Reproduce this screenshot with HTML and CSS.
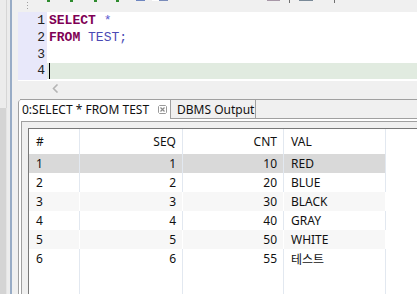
FILE: index.html
```html
<!DOCTYPE html>
<html>
<head>
<meta charset="utf-8">
<link rel="stylesheet" href="styles.css">
</head>
<body>
<div class="app">
  <div class="side">
    <div class="side-top"></div>
    <div class="side-bot"></div>
  </div>
  <div class="main">
    <div class="toolbar">
      <span class="grip"></span>
      <span class="tb g1"></span>
      <span class="tb g2"></span>
      <span class="tb g3"></span>
      <span class="tb g4"></span>
      <span class="tb b1"></span>
      <span class="tb w1"></span>
      <span class="tb b2"></span>
      <span class="tb p1"></span>
      <span class="tb t1"></span>
      <span class="tb s1"></span>
      <span class="tb t2"></span>
    </div>
    <div class="editor">
      <div class="gutter">
        <div class="ln">1</div>
        <div class="ln">2</div>
        <div class="ln">3</div>
        <div class="ln last">4</div>
      </div>
      <div class="code">
        <div class="line"><span class="kw">SELECT</span> <span class="op">*</span></div>
        <div class="line"><span class="kw">FROM</span> <span class="id">TEST;</span></div>
        <div class="line"></div>
        <div class="line cur"><span class="caret"></span></div>
      </div>
    </div>
    <div class="hscroll">
      <svg class="arrow" width="7" height="9" viewBox="0 0 7 9"><polyline points="5.5,0.5 1.5,4.5 5.5,8.5" fill="none" stroke="#b4b4b4" stroke-width="1.6"/></svg>
    </div>
    <div class="folder">
      <div class="tabstrip">
        <div class="tab active">
          <span class="tab-label">0:SELECT * FROM TEST</span>
          <svg class="close" width="9" height="9" viewBox="0 0 9 9">
            <path d="M1.5 0.5 H7.5 L8.5 1.5 V7.5 L7.5 8.5 H1.5 L0.5 7.5 V1.5 Z" fill="none" stroke="#9a9a9a" stroke-width="1"/>
            <path d="M2.5 2.5 L6.5 6.5 M6.5 2.5 L2.5 6.5" stroke="#8a8a8a" stroke-width="1.2"/>
          </svg>
        </div>
        <div class="tab">DBMS Output</div>
        <div class="tabfill"></div>
      </div>
      <div class="folder-body">
        <div class="panel">
          <div class="grid">
            <div class="row head">
              <div class="cell">#</div>
              <div class="cell num">SEQ</div>
              <div class="cell num">CNT</div>
              <div class="cell">VAL</div>
              <div class="cell rest"></div>
            </div>
            <div class="row sel">
              <div class="cell">1</div><div class="cell num">1</div><div class="cell num">10</div><div class="cell">RED</div><div class="cell rest"></div>
            </div>
            <div class="row">
              <div class="cell">2</div><div class="cell num">2</div><div class="cell num">20</div><div class="cell">BLUE</div><div class="cell rest"></div>
            </div>
            <div class="row alt">
              <div class="cell">3</div><div class="cell num">3</div><div class="cell num">30</div><div class="cell">BLACK</div><div class="cell rest"></div>
            </div>
            <div class="row">
              <div class="cell">4</div><div class="cell num">4</div><div class="cell num">40</div><div class="cell">GRAY</div><div class="cell rest"></div>
            </div>
            <div class="row alt">
              <div class="cell">5</div><div class="cell num">5</div><div class="cell num">50</div><div class="cell">WHITE</div><div class="cell rest"></div>
            </div>
            <div class="row">
              <div class="cell">6</div><div class="cell num">6</div><div class="cell num">55</div><div class="cell">테스트</div><div class="cell rest"></div>
            </div>
            <div class="row filler">
              <div class="cell"></div><div class="cell"></div><div class="cell"></div><div class="cell"></div><div class="cell rest"></div>
            </div>
          </div>
        </div>
      </div>
    </div>
  </div>
</div>
</body>
</html>
```

FILE: styles.css
```css
* { box-sizing: border-box; }
html, body {
  margin: 0;
  padding: 0;
  width: 417px;
  height: 294px;
  overflow: hidden;
  background: #f0f0f0;
}
.app {
  display: flex;
  width: 417px;
  height: 294px;
  font-family: "Noto Sans", "Noto Sans CJK KR", sans-serif;
  font-size: 12px;
  color: #111;
}
.side {
  width: 18px;
  display: flex;
  flex-direction: column;
}
.side-top {
  height: 108px;
  background: linear-gradient(to right, #ececec 0, #ececec 6px, #d6d6d6 6px, #d6d6d6 7px, #ececec 7px, #ececec 10px, #98acc6 10px, #98acc6 12px, #f0f0f0 12px);
}
.side-bot {
  flex: 1;
  background: linear-gradient(to right, #d4d4d4 0, #d4d4d4 6px, #e4e4e4 6px, #e4e4e4 7px, #ececec 7px, #ececec 10px, #98acc6 10px, #98acc6 12px, #f0f0f0 12px);
}
.main {
  flex: 1;
  display: flex;
  flex-direction: column;
  min-width: 0;
}
.toolbar {
  height: 12px;
  display: flex;
  align-items: flex-start;
}
.grip {
  width: 1px;
  height: 8px;
  margin-left: 9px;
  margin-top: 2px;
  background: repeating-linear-gradient(to bottom, #a0a0a0 0, #a0a0a0 1px, transparent 1px, transparent 3px);
}
.tb { height: 2px; display: block; }
.g1 { width: 3px; margin-left: 19px; background: #2e8b2e; }
.g2 { width: 3px; margin-left: 20px; background: #2e8b2e; }
.g3 { width: 3px; margin-left: 21px; background: #2e8b2e; }
.g4 { width: 3px; margin-left: 19px; background: #2e8b2e; }
.b1 { width: 9px; margin-left: 17px; height: 1px; background: #6e86c0; }
.w1 { width: 7px; margin-left: 7px; height: 1px; background: #ffffff; }
.b2 { width: 9px; height: 1px; background: #7a8cba; }
.p1 { width: 13px; margin-left: 99px; height: 1px; background: #a898a8; }
.t1 { width: 1px; margin-left: 9px; height: 3px; background: #707070; }
.s1 { width: 14px; margin-left: 9px; height: 1px; background: #7a8a98; }
.t2 { width: 1px; margin-left: 21px; height: 3px; background: #707070; }

.editor {
  height: 68px;
  display: flex;
  background: #fff;
  font-family: "Liberation Mono", monospace;
  font-size: 13px;
}
.gutter {
  width: 29px;
  background: #e8e8fa;
  text-align: right;
  padding-right: 2px;
  color: #222;
}
.ln { height: 17px; line-height: 17px; }
.ln.last { height: 16px; line-height: 16px; }
.code {
  flex: 1;
}
.line {
  height: 17px;
  line-height: 17px;
  padding-left: 2px;
  white-space: pre;
}
.line.cur {
  height: 16px;
  background: #e1ebe0;
  display: flex;
  align-items: stretch;
}
.caret { width: 1px; background: #000; }
.kw { color: #7f0055; font-weight: bold; }
.op { color: #5a5ad0; }
.id { color: #4a4ab4; }

.hscroll {
  height: 19px;
  background: #f0f0f0;
  border-top: 1px solid #fff;
  padding-left: 34px;
  padding-top: 3px;
}
.arrow { display: block; }

.folder {
  flex: 1;
  display: flex;
  flex-direction: column;
}
.tabstrip {
  display: flex;
  height: 20px;
  border-top: 1px solid #a0a0a0;
  margin-left: 2px;
}
.tab {
  height: 19px;
  display: flex;
  align-items: center;
  white-space: nowrap;
}
.tab.active {
  width: 152px;
  margin-left: -2px;
  background: #fff;
  border-left: 1px solid #a0a0a0;
  border-top-left-radius: 3px;
  padding-left: 3px;
}
.close { margin-left: 9px; }
.tab:not(.active) {
  width: 86px;
  padding-left: 6px;
  background: #f0f0f0;
  border-left: 1px solid #a0a0a0;
  border-right: 1px solid #a0a0a0;
  border-bottom: 1px solid #a0a0a0;
}
.tabfill {
  flex: 1;
  height: 19px;
  border-bottom: 1px solid #a0a0a0;
}
.folder-body {
  flex: 1;
  display: flex;
  background: #fff;
  border-left: 1px solid #a0a0a0;
  padding-left: 2px;
  padding-top: 2px;
  min-height: 0;
}
.panel {
  flex: 1;
  display: flex;
  border-left: 1px solid #a0a0a0;
  border-top: 1px solid #a0a0a0;
  background: #f0f0f0;
  padding-left: 6px;
  padding-top: 6px;
  min-height: 0;
}
.grid {
  flex: 1;
  display: flex;
  flex-direction: column;
  background: #fff;
  border-left: 1px solid #787878;
  border-top: 1px solid #787878;
}
.row {
  display: grid;
  grid-template-columns: 51px 103px 101px 102px 1fr;
  height: 19px;
}
.row.head { height: 25px; }
.row.filler { flex: 1; }
.cell {
  border-right: 1px solid #e2e8f0;
  padding: 0 6px 0 7px;
  display: flex;
  align-items: center;
  white-space: nowrap;
}
.cell.num { justify-content: flex-end; padding-right: 6px; }
.cell.rest { border-right: none; }
.row.sel .cell:not(.rest) { background: #d9d9d9; }
.row.alt .cell:not(.rest) { background: #f7f7f7; border-right-color: #fff; }
```
